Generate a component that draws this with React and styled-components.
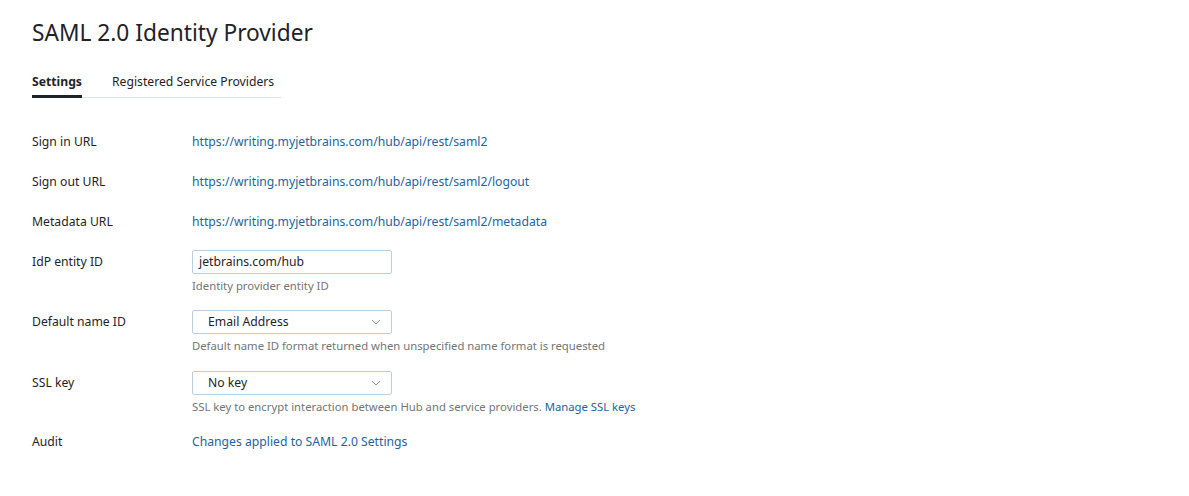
import React from 'react';
import styled, { createGlobalStyle } from 'styled-components';

const GlobalStyle = createGlobalStyle`
  body {
    margin: 0;
    background: #fff;
    font-family: "Segoe UI", "Noto Sans", "Open Sans", sans-serif;
    color: #1f2326;
  }
`;

const Page = styled.div`
  padding: 18px 32px 0 32px;
`;

const Title = styled.h1`
  margin: 0;
  font-size: 22.7px;
  font-weight: 400;
  line-height: 30px;
  color: #1f2326;
`;

const Tabs = styled.div`
  display: flex;
  width: fit-content;
  padding-right: 7px;
  margin-top: 25px;
  border-bottom: 1px solid #dfe5eb;
`;

const Tab = styled.div`
  font-size: 12.2px;
  line-height: 18px;
  padding-bottom: 4px;
  white-space: nowrap;
  margin-right: ${({ active }) => (active ? 30 : 0)}px;
  font-weight: ${({ active }) => (active ? 700 : 400)};
  margin-bottom: -1px;
  border-bottom: 3px solid ${({ active }) => (active ? '#1f2326' : 'transparent')};
`;

const Form = styled.div`
  display: flex;
  flex-direction: column;
  margin-top: 32px;
`;

const Row = styled.div`
  display: grid;
  grid-template-columns: 160px 1fr;
  align-items: start;
  min-height: ${({ h }) => h || 40}px;
`;

const Label = styled.div`
  font-size: 12.2px;
  line-height: 24px;
  color: #1f2326;
`;

const Value = styled.div`
  display: flex;
  flex-direction: column;
`;

const Link = styled.a`
  font-size: 12.2px;
  line-height: 24px;
  color: #1f62a2;
  text-decoration: none;
`;

const Input = styled.div`
  box-sizing: border-box;
  width: 200px;
  height: 24px;
  border: 1px solid #b9d0e3;
  border-radius: 2px;
  padding: 0 6px;
  font-size: 12.2px;
  line-height: 22px;
  color: #1f2326;
`;

const Select = styled(Input)`
  display: flex;
  align-items: center;
  justify-content: space-between;
  padding: 0 10px 0 15px;
`;

const Hint = styled.div`
  font-size: 11.3px;
  line-height: 16px;
  margin-top: 4px;
  color: #737577;
`;

const HintLink = styled.a`
  color: #1f62a2;
  text-decoration: none;
`;

const Chevron = () => (
  <svg width="10" height="6" viewBox="0 0 10 6" fill="none">
    <path d="M1 1l4 4 4-4" stroke="#8a9199" strokeWidth="1" />
  </svg>
);

const links = [
  ['Sign in URL', 'https://writing.myjetbrains.com/hub/api/rest/saml2'],
  ['Sign out URL', 'https://writing.myjetbrains.com/hub/api/rest/saml2/logout'],
  ['Metadata URL', 'https://writing.myjetbrains.com/hub/api/rest/saml2/metadata'],
];

export default function App() {
  return (
    <Page>
      <GlobalStyle />
      <Title>SAML 2.0 Identity Provider</Title>
      <Tabs>
        <Tab active>Settings</Tab>
        <Tab>Registered Service Providers</Tab>
      </Tabs>
      <Form>
        {links.map(([label, url]) => (
          <Row key={label}>
            <Label>{label}</Label>
            <Value>
              <Link href="#">{url}</Link>
            </Value>
          </Row>
        ))}
        <Row h={60}>
          <Label>IdP entity ID</Label>
          <Value>
            <Input>jetbrains.com/hub</Input>
            <Hint>Identity provider entity ID</Hint>
          </Value>
        </Row>
        <Row h={61}>
          <Label>Default name ID</Label>
          <Value>
            <Select>
              Email Address
              <Chevron />
            </Select>
            <Hint>Default name ID format returned when unspecified name format is requested</Hint>
          </Value>
        </Row>
        <Row h={59}>
          <Label>SSL key</Label>
          <Value>
            <Select>
              No key
              <Chevron />
            </Select>
            <Hint>
              SSL key to encrypt interaction between Hub and service providers.{' '}
              <HintLink href="#">Manage SSL keys</HintLink>
            </Hint>
          </Value>
        </Row>
        <Row>
          <Label>Audit</Label>
          <Value>
            <Link href="#">Changes applied to SAML 2.0 Settings</Link>
          </Value>
        </Row>
      </Form>
    </Page>
  );
}
